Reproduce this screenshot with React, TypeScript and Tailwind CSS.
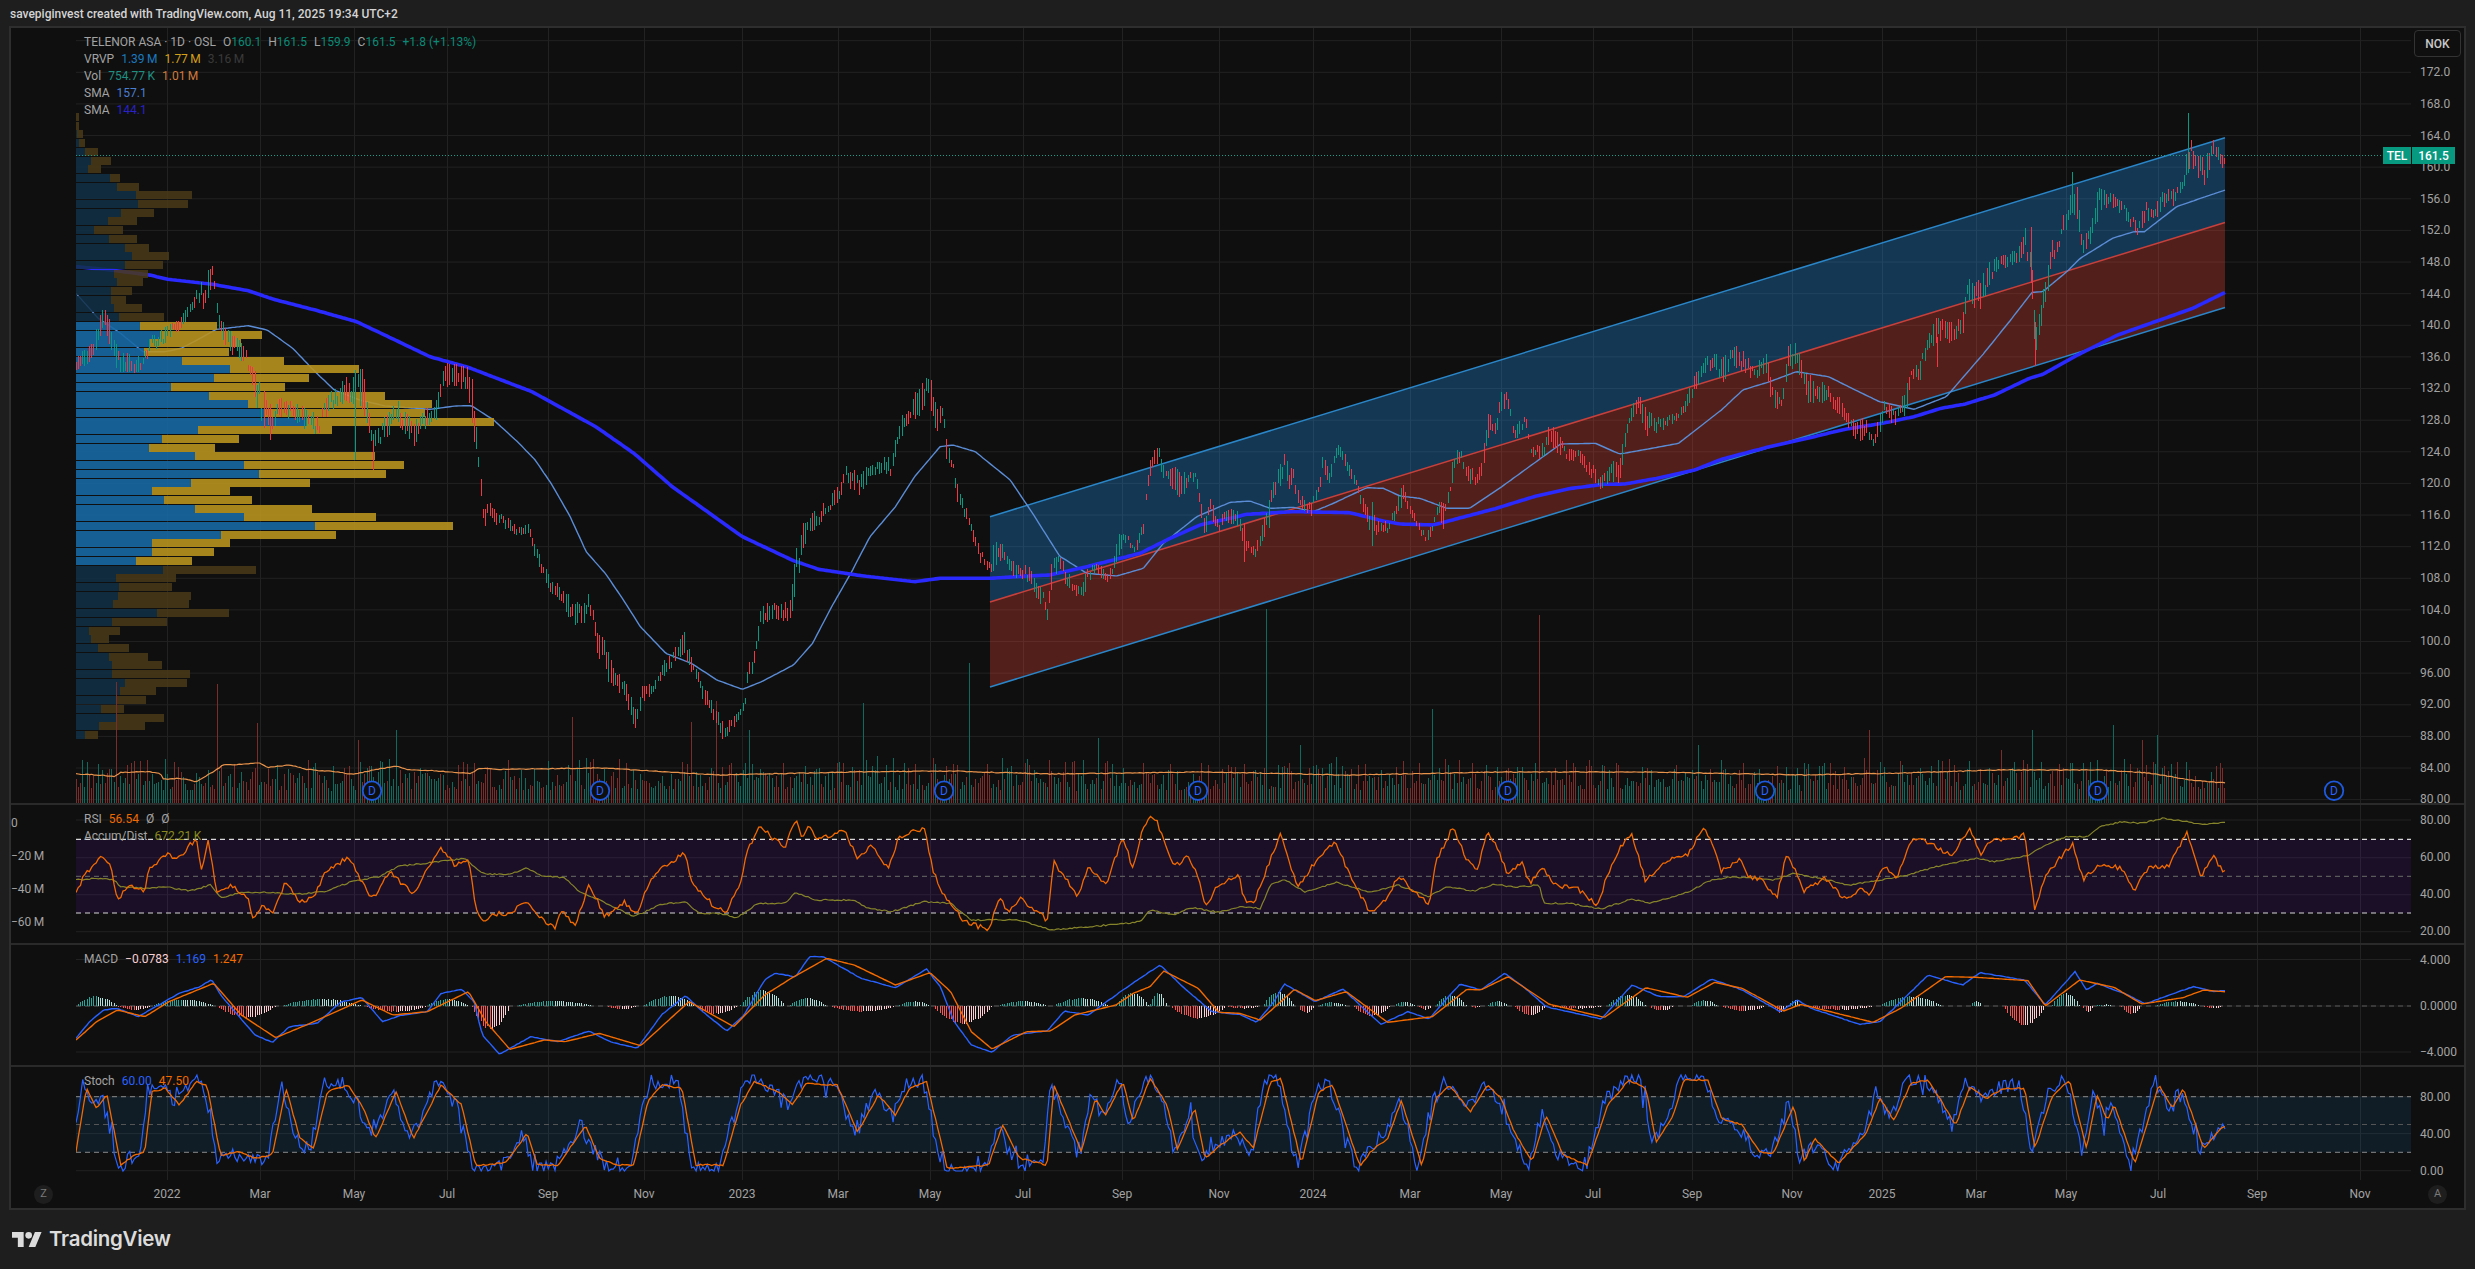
import React from 'react';

// chart traces, read off the screenshot: x origin, x scale, y origin (y scale is always 3)
type Pt = number[];

const parse = (s: string, ox: number, sx: number, oy: number): Pt[] =>
  s.trim().split(/\s+/).map((t) => {
    const v = t.split(',').map(Number);
    return [ox + v[0] / sx, ...v.slice(1).map((n) => oy + n / 3)];
  });

const join = (...parts: Pt[][]): Pt[] => {
  let out: Pt[] = [];
  for (const p of parts) out = [...out.filter((q) => q[0] < p[0][0]), ...p];
  return out;
};

const at = (t: Pt[], x: number, k = 1): number => {
  if (x <= t[0][0]) return t[0][k];
  for (let i = 1; i < t.length; i++) {
    if (x <= t[i][0]) {
      const f = (x - t[i - 1][0]) / (t[i][0] - t[i - 1][0] || 1);
      return t[i - 1][k] + (t[i][k] - t[i - 1][k]) * f;
    }
  }
  return t[t.length - 1][k];
};

let seed = 20250811;
const rnd = () => {
  seed = (seed + 0x6d2b79f5) | 0;
  let t = Math.imul(seed ^ (seed >>> 15), 1 | seed);
  t = (t + Math.imul(t ^ (t >>> 7), 61 | t)) ^ t;
  return ((t ^ (t >>> 14)) >>> 0) / 4294967296;
};

const STEP = 2.2385;
const XS: number[] = [];
for (let x = 76; x <= 2225; x += STEP) XS.push(x);
const snap = (x: number) => Math.floor(x) + 0.5;

const price = join(
  parse(
    '25,380,420 50,340,400 70,210,290 90,350,430 110,370,430 130,380,430 140,320,380 165,290,340 190,260,300 210,200,240 225,130,240 240,80,170 250,250,300 265,290,370 290,350,400 300,400,460 315,460,580 330,520,640 345,500,560 365,510,570 385,530,600 405,550,620 425,480,540 450,440,520 475,405,540 490,610,660 505,570,640 530,510,590 555,570,650 570,540,600 590,500,570 605,390,470 620,400,470 640,405,490 650,470,640 655,640,680 660,700,810 665,810,890 680,820,880 700,860,900 720,890,920 735,880,910 745,940,980 757,990,1040 770,1050,1100 785,1060,1110 805,1110,1200 825,1110,1180 830,1070,1130 840,1170,1250 856,1240,1360 870,1320,1370 885,1340,1410 895,1400,1470 905,1440,1505 915,1350,1420 930,1370,1400 945,1290,1350 960,1270,1310 980,1200,1280 990,1270,1330 1000,1320,1370 1010,1370,1420 1025,1400,1470 1040,1470,1530 1055,1460,1500 1070,1430,1460 1080,1300,1380 1090,1250,1300 1100,1130,1190 1115,1110,1170 1130,1120,1170 1145,1110,1180 1153,950,1100 1165,880,960 1180,840,910 1205,810,850 1220,760,820 1235,690,770 1255,730,800 1270,690,750 1290,680,730 1305,670,740 1315,570,640 1335,510,570 1350,450,570 1360,405,500 1375,520,620 1385,510,550 1390,620,690 1400,690,720 1405,740,810 1415,790,860 1430,880,930 1445,960,1010 1460,1000,1030 1470,910,1000',
    60, 1.568, 230,
  ),
  parse(
    '105,345,450 130,370,410 155,420,470 180,435,475 205,420,490 230,480,540 250,510,560 265,560,617 278,400,520 295,395,440 315,430,490 345,490,530 365,500,540 380,440,510 400,430,460 420,430,470 440,455,495 460,430,465 480,315,400 500,340,370 525,380,405 550,300,370 558,205,250 575,95,150 598,70,130 615,140,190 640,140,215 665,145,240 690,150,195 710,150,195 735,310,360 750,230,290 775,290,340 800,265,320 835,270,320 852,340,400 870,355,400 885,370,415 905,310,370 925,250,345 940,180,240 965,115,200 975,100,130 985,130,220 1000,140,190 1012,190,250 1040,245,280 1055,245,290 1070,200,235 1090,105,195 1110,150,190 1130,75,130 1140,60,120 1165,125,160 1185,165,205 1200,200,250 1225,260,325 1237,280,350 1265,295,340 1285,300,340 1310,250,310 1330,180,250 1350,255,290 1370,290,320 1395,335,378 1420,310,340 1435,235,270 1450,250,335 1470,200,220 1480,88,180 1495,90,120',
    960, 3, 420,
  ),
  parse(
    '110,1020,1100 115,1020,1060 130,1060,1130 150,1070,1130 165,900,990 180,930,975 190,840,905 200,840,915 215,940,990 235,910,960 245,1010,1040 265,1000,1050 280,930,1000 295,960,1030 310,1015,1060 335,1020,1060 360,1060,1110 375,1100,1140 395,1060,1110 410,1030,1140 425,920,960 445,850,900 465,900,1000 490,915,960 510,910,940 530,880,920 550,795,850 575,730,780 605,730,820 620,700,770 640,715,785 660,770,815 685,725,790 695,830,900 715,845,900 725,700,790 738,695,780 760,780,880 780,815,880 800,815,890 825,870,920 850,930,990 870,920,1000 885,980,1025 905,855,930 925,905,950 945,825,915 955,770,800 970,760,825 985,675,730 1005,610,700 1030,635,700 1050,610,680 1062,500,590 1085,490,600 1105,445,510 1130,430,480 1155,410,460 1168,350,420 1178,400,500 1187,650,760 1200,540,650 1208,480,560 1220,365,470 1230,400,420 1245,260,360 1255,220,300 1265,220,340 1275,350,430 1285,360,430 1300,230,345 1320,240,290 1340,250,300 1360,300,345 1378,340,385 1390,270,340 1410,290,340 1425,230,290 1445,235,290 1465,190,230 1472,60,180 1485,130,190 1500,130,240 1512,125,180 1520,80,130 1525,60,150 1535,130,175 1541,140,175',
    1400, 1.867, 110,
  ),
);

// the long single-bar wicks
const wicks: [number, number, number, string][] = [
  [355, 370, 460, 'g'], [373, 440, 470, 'r'], [1244, 523, 562, 'r'], [1372, 502, 546, 'g'],
  [2035, 322, 366, 'r'], [2031, 227, 283, 'r'],
  [2188, 113, 173, 'g'], [2072, 172, 213, 'g'], [1937, 337, 367, 'r'],
];

const sma200 = join(
  parse(
    '25,110 80,120 140,135 170,148 240,163 295,182 335,208 400,240 465,275 520,325 580,380 640,412 740,485 840,590 900,670 960,770 1070,920 1150,992 1190,1018 1260,1038 1340,1055 1380,1045 1460,1045',
    60, 1.568, 230,
  ),
  parse('90,475 200,468 270,465 380,440 540,400 620,360 720,315 860,283 1000,275 1170,278 1270,303 1320,312 1420,315', 960, 3, 420),
  parse('180,1195 250,1160 320,1135 380,1123 420,1122 480,1105 550,1080 600,1048 690,1010 760,985 830,958 900,940 960,920 1010,895 1055,882 1110,855 1175,805 1200,793 1265,735 1340,675 1480,595 1541,547', 1400, 1.867, 110),
);

const sma50 = join(
  parse(
    '25,190 60,265 95,310 130,365 165,365 190,355 215,330 245,298 295,287 325,300 365,355 400,425 430,480 470,510 510,528 580,538 620,528 645,527 680,570 720,640 745,690 770,760 800,860 825,965 855,1030 880,1100 910,1190 950,1270 990,1300 1030,1350 1070,1378 1100,1355 1150,1305 1180,1240 1210,1130 1240,1030 1270,920 1310,830 1340,740 1380,650 1400,645 1435,665 1490,750 1525,850 1568,980',
    60, 1.568, 230,
  ),
  parse('310,415 380,460 470,468 550,445 610,370 710,290 810,247 870,243 930,265 1000,262 1060,275 1120,250 1220,203 1270,205 1320,228 1380,235 1460,265', 960, 3, 420),
  parse('130,1195 190,1130 250,1060 300,1002 365,1000 410,1032 460,1018 520,1000 600,900 640,840 690,815 740,785 800,800 850,840 895,875 960,898 1020,860 1090,730 1140,630 1180,547 1200,545 1245,485 1270,445 1330,385 1370,365 1390,365 1450,290 1500,262 1541,240', 1400, 1.867, 110),
);

const volMa: Pt[] = [
  ...parse('228,102 300,105 345,110 360,97 440,95 480,100 490,118 540,115 590,125 640,95 670,75 740,72 780,68 800,82 870,75 920,88 1000,95 1060,103 1130,88 1190,78 1220,88 1300,92 1410,100 1440,85 1500,88', 0, 3, 740),
  [600, 768], [720, 775], [850, 772], [950, 771], [1050, 774], [1200, 772], [1350, 775], [1500, 772], [1650, 772], [1800, 775], [1900, 773], [2000, 770], [2100, 770], [2150, 773], [2190, 780], [2225, 783],
];

const Z11 = 1.452;
const rsi = join(
  parse('0,270 10,215 40,150 50,180 60,280 80,245 100,260 105,190 130,150 150,155 175,100 182,195 192,100 205,270 225,240 250,280 258,345 270,300 285,325 305,230 325,290 345,280 360,205 395,155 410,210 430,285 455,200 490,270 510,190 530,130 550,180 570,160 580,300 590,355 610,325 630,325 655,285 670,330 695,370 705,320 725,360 745,235 768,335 795,290 815,330 830,240 855,180 885,145 895,240 925,300 945,320 965,230 975,135 995,60 1010,100 1030,125 1045,40 1055,100 1065,60 1075,105 1115,75 1135,160 1155,125 1180,190 1195,95 1232,70 1245,200 1260,270 1290,350 1325,375 1340,280 1355,320 1370,280 1410,345 1420,170 1455,275 1470,180 1495,240 1520,95 1535,195 1550,60', 76, Z11, 805),
  parse('0,40 10,50 25,135 35,185 55,155 70,210 80,310 95,250 115,225 130,205 135,280 150,300 170,190 190,85 200,160 215,245 240,170 270,110 290,210 320,325 345,280 360,210 405,300 415,170 440,65 460,165 475,195 490,80 505,130 520,210 540,175 552,235 570,190 590,240 620,250 650,300 665,205 690,100 700,90 720,230 745,170 780,150 805,60 830,200 855,160 870,215 890,225 910,280 925,140 950,260 980,220 1010,285 1030,250 1045,275 1065,185 1085,220 1105,105 1130,110 1165,155 1190,65 1205,150 1220,105 1250,100 1270,90 1285,315 1300,210 1340,115 1355,225 1380,175 1410,190 1430,255 1450,185 1480,185 1505,80 1525,215 1545,155 1558,200', 1150, Z11, 805),
);
const accum = join(
  parse('0,225 30,220 55,225 65,245 100,250 130,245 165,258 195,240 210,278 240,262 280,262 320,268 360,260 400,230 440,215 470,183 520,172 565,160 590,205 625,210 655,190 675,212 710,218 730,258 765,290 810,335 850,298 885,290 905,325 935,325 960,338 990,295 1030,295 1045,262 1075,285 1130,285 1150,310 1185,320 1230,290 1270,295 1300,345 1340,345 1370,345 1415,375 1500,360 1545,350', 76, Z11, 805),
  parse('0,315 35,330 60,308 100,322 130,305 160,310 175,240 195,222 225,262 270,232 320,262 360,240 405,275 430,245 470,258 500,238 530,247 565,240 572,295 610,295 655,312 700,282 725,295 780,262 815,225 845,215 905,225 935,205 985,225 1015,240 1060,225 1100,210 1150,180 1200,160 1225,170 1275,152 1300,120 1330,95 1360,95 1380,65 1410,50 1440,55 1470,40 1530,58 1560,52', 1150, Z11, 805),
);
const macd = join(
  parse('0,700 20,650 40,615 60,610 90,635 120,600 150,565 180,545 197,523 210,570 235,630 260,690 285,712 310,665 350,655 385,590 415,578 445,650 470,632 510,620 530,565 560,553 578,590 590,690 615,748 660,695 700,710 745,678 775,710 815,730 850,630 885,572 910,620 945,678 970,630 1000,525 1015,505 1045,515 1065,455 1085,455 1110,485 1140,520 1190,548 1235,492 1255,545 1275,650 1300,720 1330,742 1360,690 1410,678 1435,618 1470,630 1520,555', 76, Z11, 805),
  parse('0,500 15,480 50,550 90,620 130,628 155,652 180,590 195,537 240,590 280,552 300,590 335,658 375,620 405,642 450,537 480,555 515,505 545,550 575,605 655,642 700,540 740,575 775,575 815,522 860,555 915,620 940,585 960,610 1030,658 1060,650 1130,510 1180,540 1205,503 1270,525 1300,600 1343,500 1360,555 1375,535 1420,570 1445,597 1480,570 1515,545 1545,560 1558,557', 1150, Z11, 805),
);
const signal = join(
  parse('0,705 30,650 60,615 100,635 135,590 200,535 240,630 290,698 340,655 415,585 460,630 510,620 570,560 595,650 630,733 680,705 710,710 760,685 820,722 890,590 955,665 1000,570 1040,518 1090,460 1130,480 1190,540 1240,503 1270,560 1300,680 1330,732 1380,680 1415,678 1450,630 1510,600 1535,565', 76, Z11, 805),
  parse('0,545 20,498 70,550 100,622 130,625 160,645 210,553 240,587 285,560 345,652 410,635 460,553 480,555 520,515 580,598 660,637 720,548 780,577 820,532 860,550 920,618 945,598 1050,652 1090,610 1155,515 1200,517 1275,527 1300,603 1350,525 1400,547 1440,597 1500,578 1530,555 1558,560', 1150, Z11, 805),
);
const stochD = join(
  parse('0,1040 15,850 30,910 45,870 65,1080 85,1050 100,1040 110,860 130,850 150,900 175,830 190,840 210,1050 235,1040 260,1060 285,1050 305,850 325,1000 345,1030 365,860 395,840 415,900 435,1000 465,860 490,1000 530,840 560,900 580,1080 600,1080 625,1070 655,985 670,1080 700,1080 740,960 760,1060 785,1080 810,1080 830,890 850,840 880,850 900,1080 940,1080 965,900 985,830 1020,860 1040,900 1060,835 1105,840 1135,980 1165,870 1190,930 1210,850 1235,830 1265,1090 1325,1080 1345,960 1370,1060 1410,1080 1420,840 1460,1040 1480,880 1495,930 1520,830 1535,950', 76, Z11, 805),
  parse('0,820 25,900 40,1035 65,910 80,1060 100,1025 130,980 150,1030 175,830 190,820 220,1075 245,860 265,840 305,1085 320,1040 345,1000 365,885 395,1085 415,880 435,840 465,920 490,840 510,880 530,985 555,1070 575,930 600,1050 635,1080 665,900 695,825 720,850 735,1010 760,930 775,825 810,825 830,940 860,960 885,1040 905,1045 935,900 950,1070 965,1000 1000,1075 1040,985 1060,880 1080,945 1105,835 1130,825 1170,960 1190,845 1215,880 1240,850 1270,850 1285,1030 1310,875 1335,825 1360,1030 1375,870 1390,945 1400,900 1430,1075 1465,840 1485,910 1500,850 1530,1030 1558,965', 1150, Z11, 805),
);

// [from, to, height] in the 3x crop, plus: above zero, minus: below
const humps: [number, number, number][] = [
  ...([
    [0, 60, 30], [60, 110, -12], [110, 200, 20], [205, 290, -35], [300, 415, 22], [420, 510, -18], [510, 570, 22], [575, 630, -72], [640, 750, 16], [770, 815, -10], [825, 900, 32], [900, 960, -25], [965, 1030, 50], [1035, 1090, 25], [1095, 1190, -18], [1195, 1240, 15], [1245, 1330, -55], [1340, 1410, 15], [1420, 1500, 25], [1510, 1558, 40],
  ] as [number, number, number][]).map(([a, b, h]): [number, number, number] => [76 + a / Z11, 76 + b / Z11, h / 3]),
  ...([
    [0, 25, 40], [30, 110, -40], [110, 160, -8], [165, 210, 45], [215, 240, -22], [245, 285, 12], [295, 350, -32], [355, 385, 15], [390, 410, -12], [415, 460, 35], [465, 480, -5], [490, 520, 15], [530, 575, -30], [580, 660, -8], [665, 720, 35], [725, 760, -15], [785, 825, 18], [830, 895, -15], [905, 925, -22], [928, 945, 20], [955, 1050, -12], [1060, 1150, 30], [1190, 1210, 15], [1240, 1300, -60], [1310, 1350, 40], [1355, 1370, -20], [1370, 1400, 5], [1410, 1440, -25], [1460, 1525, 15], [1530, 1558, -8],
  ] as [number, number, number][]).map(([a, b, h]): [number, number, number] => [1150 + a / Z11, 1150 + b / Z11, h / 3]),
];

// candles and volume share up/down
const upPath: string[] = [];
const downPath: string[] = [];
const volUp: string[] = [];
const volDown: string[] = [];
const spikes: [number, number, string][] = [
  [117, 682, 'r'], [217, 684, 'r'], [258, 723, 'r'], [357, 740, 'r'], [397, 730, 'g'], [572, 717, 'r'], [691, 722, 'r'], [749, 730, 'g'], [865, 703, 'g'], [970, 663, 'g'], [1267, 609, 'g'], [1540, 615, 'r'], [1433, 709, 'g'], [717, 701, 'r'], [1870, 730, 'r'], [2033, 730, 'g'], [2112, 725, 'g'], [2143, 740, 'r'], [2157, 735, 'g'], [2188, 762, 'g'], [1100, 738, 'g'], [1700, 745, 'g'], [2000, 750, 'r'], [1300, 745, 'g'],
];
XS.forEach((x, i) => {
  const px = snap(x);
  const top = at(price, x, 1);
  const bot = at(price, x, 2);
  const mid = (top + bot) / 2;
  const prev = i ? (at(price, XS[i - 1], 1) + at(price, XS[i - 1], 2)) / 2 : mid;
  const len = (bot - top) * (0.3 + 0.65 * rnd());
  const a = top + (bot - top - len) * rnd();
  const up = rnd() < (mid < prev ? 0.68 : 0.36);
  (up ? upPath : downPath).push(`M${px} ${a.toFixed(1)}V${(a + len).toFixed(1)}`);
  const s = spikes.find((k) => Math.abs(k[0] - x) < STEP / 2);
  const r = rnd();
  const vTop = s ? s[1] : 803 - (12 + 28 * r * r + 8 * rnd());
  const vUp = s ? s[2] === 'g' : up;
  (vUp ? volUp : volDown).push(`M${px} 803V${vTop.toFixed(1)}`);
});
for (const w of wicks) (w[3] === 'g' ? upPath : downPath).push(`M${snap(w[0])} ${w[1]}V${w[2]}`);

const line = (t: Pt[], jitter = 0) =>
  'M' +
  XS.map((x) => `${x.toFixed(1)} ${(at(t, x) + (jitter ? (rnd() - 0.5) * jitter : 0)).toFixed(1)}`).join('L');

const stochK =
  'M' +
  XS.map((x) => {
    const d = at(stochD, x + 4);
    const extra = rnd() < 0.14 ? 38 : 14;
    const y = 1124 + (d - 1124) * 1.08 + (rnd() - 0.5) * extra;
    return `${x.toFixed(1)} ${Math.min(1171, Math.max(1075, y)).toFixed(1)}`;
  }).join('L');

const histBars = XS.map((x) => {
  const h = humps.find((k) => x >= k[0] && x < k[1]);
  if (!h) return null;
  const t = (x - h[0]) / (h[1] - h[0]);
  const v = h[2] * Math.pow(Math.sin(Math.PI * t), 0.8) * (0.85 + 0.15 * rnd());
  const up = h[2] > 0;
  const rising = t < 0.5;
  const fill = up ? (rising ? '#26a69a' : '#b2dfdb') : rising ? '#ff5252' : '#ffcdd2';
  return { x: Math.floor(x), v, fill };
}).filter(Boolean) as { x: number; v: number; fill: string }[];

// VRVP rows from the top of the pane: up volume, total
const vrvp: [number, number][] = [
  [0, 3], [0, 3], [1, 7], [3, 9], [9, 22], [15, 35], [12, 25], [34, 44], [41, 63], [60, 116], [62, 112], [45, 78], [32, 61], [18, 47], [33, 61], [49, 73], [56, 93], [49, 87], [38, 72],
  [41, 67], [35, 56], [35, 50], [38, 66], [43, 88], [64, 141], [84, 186], [74, 165], [68, 153], [106, 208], [154, 283], [138, 233], [95, 209], [133, 309], [172, 356], [188, 349], [230, 418], [122, 256], [86, 163], [73, 139], [119, 299], [168, 328], [183, 310], [115, 234], [76, 154], [88, 176], [119, 236], [168, 300], [239, 377], [145, 260], [76, 154], [76, 138], [60, 116],
  [87, 180], [40, 100], [43, 96], [42, 115], [37, 113], [81, 153], [36, 91], [13, 44], [15, 33], [22, 53], [33, 72], [36, 86], [36, 114], [49, 111], [44, 80], [41, 70], [25, 48], [40, 88], [23, 69], [9, 22],
];

const PRICE_Y = (p: number) => 72.3 + (172 - p) * 7.906;
const TICKS = [167, 260, 354, 447, 548, 644, 742, 838, 930, 1023, 1122, 1219, 1313, 1410, 1501, 1593, 1692, 1792, 1882, 1976, 2066, 2158, 2257, 2360];
const TICK_LABELS = ['2022', 'Mar', 'May', 'Jul', 'Sep', 'Nov', '2023', 'Mar', 'May', 'Jul', 'Sep', 'Nov', '2024', 'Mar', 'May', 'Jul', 'Sep', 'Nov', '2025', 'Mar', 'May', 'Jul', 'Sep', 'Nov'];
const DIVS = [372, 600, 944, 1198, 1508, 1765, 2098, 2334];
const prices: number[] = [];
for (let p = 172; p >= 80; p -= 4) prices.push(p);

function Grid({ y0, h, rows }: { y0: number; h: number; rows: number[] }) {
  return (
    <g stroke="#222222" strokeWidth="1">
      {TICKS.map((x, i) => (
        <line key={i} x1={x + 0.5} x2={x + 0.5} y1={y0} y2={y0 + h} />
      ))}
      {rows.map((y, i) => (
        <line key={i} x1="76" x2="2411" y1={y} y2={y} />
      ))}
    </g>
  );
}

function Axis({ labels, step, className = '' }: { labels: string[]; step: number; className?: string }) {
  return (
    <div className={`flex flex-col ${className}`}>
      {labels.map((l, i) => (
        <div key={i} style={{ height: step }} className="flex shrink-0 items-center">
          {l}
        </div>
      ))}
    </div>
  );
}

function Pane({
  y0,
  h,
  left,
  right,
  legend,
  children,
  last,
}: {
  y0: number;
  h: number;
  left?: React.ReactNode;
  right: React.ReactNode;
  legend: React.ReactNode;
  children: React.ReactNode;
  last?: boolean;
}) {
  const inner = last ? h : h - 2;
  return (
    <div style={{ height: h }} className={`flex shrink-0 ${last ? '' : 'border-b-2 border-[#2a2a2a]'}`}>
      <div className="w-[65px] shrink-0 overflow-hidden text-right pr-[9px]">{left}</div>
      <div className="relative w-[2335px] shrink-0">
        <svg viewBox={`76 ${y0} 2335 ${inner}`} style={{ height: inner }} className="block w-[2335px]">
          {children}
        </svg>
        {legend}
      </div>
      <div className="relative flex-1 overflow-hidden pl-[9px]">{right}</div>
    </div>
  );
}

function Legend({ rows, className }: { rows: React.ReactNode[]; className: string }) {
  return (
    <div className={`absolute left-[8px] flex flex-col ${className}`}>
      {rows.map((r, i) => (
        <div key={i} className="flex h-[17px] items-center gap-[7px] whitespace-nowrap leading-[17px]">
          {r}
        </div>
      ))}
    </div>
  );
}

export default function App() {
  return (
    <div className="flex h-[1269px] w-[2475px] flex-col overflow-hidden bg-[#1e1e1e] text-[12px] text-[#a3a3a3] [font-family:Roboto,sans-serif]">
      <div className="flex h-[26px] shrink-0 items-center pl-[10px] pt-[2px] text-[12px] font-medium text-[#d4d4d4]">
        savepiginvest created with TradingView.com, Aug 11, 2025 19:34 UTC+2
      </div>

      <div className="ml-[9px] h-[1184px] w-[2457px] shrink-0 border-2 border-[#2e2e2e] bg-[#0f0f0f]">
        {/* Price */}
        <Pane
          y0={28}
          h={777}
          right={
            <>
              <Axis labels={prices.map((p) => (p >= 100 ? p.toFixed(1) : p.toFixed(2)))} step={31.62} className="mt-[28.5px]" />
              <div className="absolute right-[3px] top-[2px] flex h-[27px] w-[47px] items-center justify-center rounded-[4px] border border-[#333333] bg-[#0f0f0f] font-medium text-[#c8c8c8]">
                NOK
              </div>
              <div className="absolute left-[1px] top-[119px] flex h-[17px] w-[43px] items-center justify-center bg-[#089981] font-medium text-white">
                161.5
              </div>
            </>
          }
          legend={
            <>
              <Legend
                className="top-[5.5px]"
                rows={[
                  <>
                    <span>TELENOR ASA · 1D · OSL</span>
                    <span>
                      O<span className="text-[#0a8a76]">160.1</span>
                    </span>
                    <span>
                      H<span className="text-[#0a8a76]">161.5</span>
                    </span>
                    <span>
                      L<span className="text-[#0a8a76]">159.9</span>
                    </span>
                    <span>
                      C<span className="text-[#0a8a76]">161.5</span>
                    </span>
                    <span className="text-[#0a8a76]">+1.8 (+1.13%)</span>
                  </>,
                  <>
                    <span>VRVP</span>
                    <span className="text-[#1a7ac0]">{'1.39\u2009M'}</span>
                    <span className="text-[#d4a017]">{'1.77\u2009M'}</span>
                    <span className="text-[#3a3a3a]">{'3.16\u2009M'}</span>
                  </>,
                  <>
                    <span>Vol</span>
                    <span className="text-[#1f8f82]">{'754.77\u2009K'}</span>
                    <span className="text-[#d07a3c]">{'1.01\u2009M'}</span>
                  </>,
                  <>
                    <span>SMA</span>
                    <span className="text-[#4a7ed0]">157.1</span>
                  </>,
                  <>
                    <span>SMA</span>
                    <span className="text-[#2a22c8]">144.1</span>
                  </>,
                ]}
              />
              <div className="absolute right-0 top-[119px] flex h-[17px] w-[28px] items-center justify-center bg-[#089981] font-medium text-white">
                TEL
              </div>
            </>
          }
        >
          <Grid y0={28} h={775} rows={[176, ...prices].map(PRICE_Y)} />
          <polygon points="990,516.7 2225,137.7 2225,222.5 990,602" fill="#2196f3" fillOpacity="0.3" />
          <polygon points="990,602 2225,222.5 2225,307.5 990,687" fill="#f04538" fillOpacity="0.3" />
          <g fill="none" strokeWidth="1.5">
            <path d="M990 516.7L2225 137.7" stroke="#2a86c8" />
            <path d="M990 602L2225 222.5" stroke="#c8403c" />
            <path d="M990 687L2225 307.5" stroke="#2a86c8" />
          </g>
          <path d={line(sma50)} fill="none" stroke="#5b8cd6" strokeWidth="1.4" />
          <path d={line(sma200)} fill="none" stroke="#2a2aff" strokeWidth="3.6" />
          {vrvp.map(([b, t], i) => {
            const y = Math.round(113 + i * 8.704);
            const lit = i >= 24 && i <= 51;
            return (
              <g key={i} fillOpacity={lit ? 0.9 : 0.85} shapeRendering="crispEdges">
                <rect x="76" y={y} width={b} height="8" fill={lit ? '#1668a4' : '#102f46'} />
                <rect x={76 + b} y={y} width={t - b} height="8" fill={lit ? '#b8921f' : '#4a3a16'} />
              </g>
            );
          })}
          <g strokeWidth="1" shapeRendering="crispEdges">
            <path d={volUp.join('')} stroke="#0c6b5f" />
            <path d={volDown.join('')} stroke="#7d2c2c" />
          </g>
          <path d={line(volMa, 0.8)} fill="none" stroke="#e8934c" strokeWidth="1.2" />
          <g strokeWidth="1" shapeRendering="crispEdges">
            <path d={upPath.join('')} stroke="#089981" />
            <path d={downPath.join('')} stroke="#f23645" />
          </g>
          <line x1="76" x2="2385" y1="155.5" y2="155.5" stroke="#14a08c" strokeDasharray="1 2" />
          {DIVS.map((x) => (
            <g key={x}>
              <circle cx={x} cy="790.7" r="9.3" fill="#0f0f0f" stroke="#1e5ae0" strokeWidth="1.8" />
              <text x={x} y="795" textAnchor="middle" fontSize="12" fill="#2962ff">
                D
              </text>
            </g>
          ))}
        </Pane>

        {/* RSI + Accum/Dist */}
        <Pane
          y0={805}
          h={140}
          left={<Axis labels={['0', '\u221220\u2009M', '\u221240\u2009M', '\u221260\u2009M']} step={33} className="mt-[1.5px]" />}
          right={<Axis labels={['80.00', '60.00', '40.00', '20.00']} step={37} className="-mt-[3.5px]" />}
          legend={
            <Legend
              className="top-[5.5px]"
              rows={[
                <>
                  <span>RSI</span>
                  <span className="text-[#f06a00]">56.54</span>
                  <span>Ø</span>
                  <span>Ø</span>
                </>,
                <>
                  <span>Accum/Dist</span>
                  <span className="text-[#8a8a1e]">{'672.21\u2009K'}</span>
                </>,
              ]}
            />
          }
        >
          <Grid y0={805} h={138} rows={[820, 857.7, 894.7, 931.7]} />
          <rect x="76" y="839.3" width="2335" height="73.7" fill="#6a0fc0" fillOpacity="0.14" />
          <g strokeWidth="1.2">
            <line x1="76" x2="2411" y1="839.3" y2="839.3" stroke="#d8d8d8" strokeDasharray="5 4" />
            <line x1="76" x2="2411" y1="913" y2="913" stroke="#d8d8d8" strokeDasharray="5 4" />
            <line x1="76" x2="2411" y1="876.3" y2="876.3" stroke="#5a5a5a" strokeDasharray="5 4" />
          </g>
          <path d={line(accum, 1.4)} fill="none" stroke="#85842a" strokeWidth="1.2" />
          <path d={line(rsi, 5)} fill="none" stroke="#f26a00" strokeWidth="1.3" />
        </Pane>

        {/* MACD */}
        <Pane
          y0={945}
          h={122}
          right={<Axis labels={['4.000', '0.0000', '\u22124.000']} step={46.3} className="-mt-[8.6px]" />}
          legend={
            <Legend
              className="top-[5.5px]"
              rows={[
                <>
                  <span>MACD</span>
                  <span className="text-[#f8cfd4]">{'\u22120.0783'}</span>
                  <span className="text-[#2962ff]">1.169</span>
                  <span className="text-[#f06a00]">1.247</span>
                </>,
              ]}
            />
          }
        >
          <Grid y0={945} h={120} rows={[959.5, 1006, 1052]} />
          <line x1="76" x2="2411" y1="1006" y2="1006" stroke="#5a5a5a" strokeDasharray="5 4" />
          <g shapeRendering="crispEdges">
            {histBars.map((b, i) => (
              <rect key={i} x={b.x} width="1" y={b.v > 0 ? 1006 - b.v : 1006} height={Math.abs(b.v)} fill={b.fill} />
            ))}
          </g>
          <path d={line(macd, 0.5)} fill="none" stroke="#2962ff" strokeWidth="1.4" />
          <path d={line(signal)} fill="none" stroke="#f26a00" strokeWidth="1.4" />
        </Pane>

        {/* Stoch */}
        <Pane
          y0={1067}
          h={113}
          last
          right={<Axis labels={['80.00', '40.00', '0.00']} step={37} className="mt-[11.2px]" />}
          legend={
            <Legend
              className="top-[5.5px]"
              rows={[
                <>
                  <span>Stoch</span>
                  <span className="text-[#2962ff]">60.00</span>
                  <span className="text-[#f06a00]">47.50</span>
                </>,
              ]}
            />
          }
        >
          <Grid y0={1067} h={113} rows={[1096.7, 1133.6, 1170.7]} />
          <rect x="76" y="1096.7" width="2335" height="55.6" fill="#2196f3" fillOpacity="0.1" />
          <g stroke="#8a8a8a">
            <line x1="76" x2="2411" y1="1096.7" y2="1096.7" strokeDasharray="5 4" />
            <line x1="76" x2="2411" y1="1152.3" y2="1152.3" strokeDasharray="5 4" />
            <line x1="76" x2="2411" y1="1124.5" y2="1124.5" strokeDasharray="5 4" stroke="#555555" />
          </g>
          <path d={stochK} fill="none" stroke="#2962ff" strokeWidth="1.2" />
          <path d={line(stochD, 1.5)} fill="none" stroke="#f26a00" strokeWidth="1.3" />
        </Pane>

        {/* Time axis */}
        <div className="flex h-[28px] items-center">
          <div className="flex w-[65px] shrink-0 justify-center">
            <div className="flex h-[19px] w-[19px] items-center justify-center rounded-full bg-[#1e1e1e] text-[11px] text-[#7a7a7a]">
              Z
            </div>
          </div>
          <div className="flex w-[2335px] shrink-0">
            {TICKS.map((x, i) => (
              <div
                key={i}
                style={{ marginLeft: x - (i ? TICKS[i - 1] : 76) }}
                className="flex w-0 justify-center whitespace-nowrap"
              >
                {TICK_LABELS[i]}
              </div>
            ))}
          </div>
          <div className="flex flex-1 justify-center">
            <div className="flex h-[19px] w-[19px] items-center justify-center rounded-full bg-[#1e1e1e] text-[11px] text-[#7a7a7a]">
              A
            </div>
          </div>
        </div>
      </div>

      <div className="flex flex-1 items-center gap-[7px] pl-[12px] pb-[1px] text-[#dcdcdc]">
        <svg viewBox="0 4 36 18" className="h-[15px] w-[30px]" fill="currentColor">
          <path d="M14 22H7V11H0V4h14v18zM28 22h-8l7.5-18h8L28 22z" />
          <circle cx="20" cy="8" r="4" />
        </svg>
        <span className="text-[20.5px] font-semibold tracking-[-0.3px] [font-family:Inter,sans-serif]">TradingView</span>
      </div>
    </div>
  );
}
